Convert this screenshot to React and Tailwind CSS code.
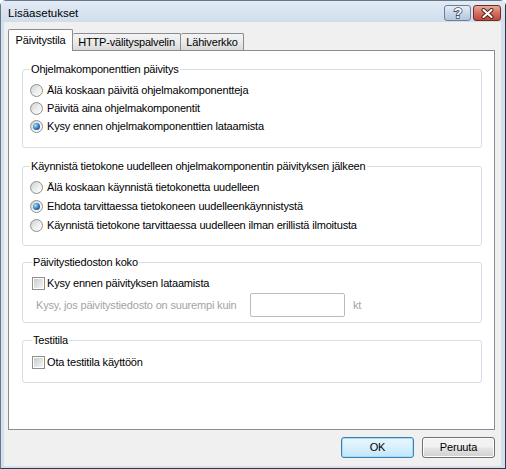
import React from 'react'

function Radio({ checked, label }) {
  return (
    <div className="flex items-center">
      <span className="flex h-[13px] w-[13px] items-center justify-center rounded-full border border-[#8e8f8f] bg-gradient-to-br from-[#cfcfcf] via-[#ececec] to-[#ffffff]">
        {checked && (
          <span className="h-[7px] w-[7px] rounded-full bg-[radial-gradient(circle_at_35%_35%,#b6e2fa,#3479c2_50%,#0e3c7a)]" />
        )}
      </span>
      <span className="ml-[4px]">{label}</span>
    </div>
  )
}

function Checkbox({ label }) {
  return (
    <div className="flex h-[18px] items-center">
      <span className="ml-[2px] flex h-[13px] w-[13px] items-center justify-center border border-[#8e8f8f] bg-white">
        <span className="h-[9px] w-[9px] bg-gradient-to-br from-[#cbcbcb] to-[#f6f6f6]" />
      </span>
      <span className="ml-[2px]">{label}</span>
    </div>
  )
}

function Group({ title, legendClass = 'ml-0', className = '', children }) {
  return (
    <fieldset className={`rounded-[3px] border border-[#d5dfe5] px-[7px] ${className}`}>
      <legend className={`px-[1px] leading-[13px] text-black ${legendClass}`}>{title}</legend>
      {children}
    </fieldset>
  )
}

function HelpButton() {
  return (
    <div className="flex h-[16px] w-[27px] items-center justify-center rounded-[3px] border border-[#6c7f95] bg-gradient-to-b from-[#e6eef8] via-[#c9d8ea] to-[#b3c7de]">
      <svg width="12" height="14" viewBox="0 0 12 14">
        <text x="6" y="12" textAnchor="middle" fontSize="14" fontWeight="bold" fontFamily="Liberation Sans, Arial, sans-serif" fill="#ffffff" stroke="#3c4c5e" strokeWidth="1.6" paintOrder="stroke">?</text>
      </svg>
    </div>
  )
}

function CloseButton() {
  return (
    <div className="flex h-[16px] w-[28px] items-center justify-center rounded-[3px] border border-[#6e2d25] bg-gradient-to-b from-[#e9a99c] via-[#d2705f] to-[#c2473a]">
      <svg width="13" height="11" viewBox="0 0 13 11">
        <path d="M2.5 2 L10.5 9 M10.5 2 L2.5 9" stroke="#4a1c16" strokeWidth="4" strokeLinecap="round" />
        <path d="M2.5 2 L10.5 9 M10.5 2 L2.5 9" stroke="#ffffff" strokeWidth="2.2" strokeLinecap="round" />
      </svg>
    </div>
  )
}

export default function App() {
  return (
    <div className="flex h-[469px] w-[506px] flex-col rounded-t-[6px] border border-[#687889] border-r-[#2e3842] border-b-[#2e3842] bg-[#d3e0ee] font-['Liberation_Sans',Arial,sans-serif] text-[11px] tracking-[-0.18px] text-black">
      {/* title bar */}
      <div className="flex h-[21px] items-start bg-gradient-to-b from-[#e2ebf5] to-[#d0ddec] pl-[7px] pr-[4px]">
        <span className="mt-[5px] text-[11.5px] leading-[14px] tracking-normal">Lisäasetukset</span>
        <div className="ml-auto mt-[4px] flex gap-[2px]">
          <HelpButton />
          <CloseButton />
        </div>
      </div>

      {/* client */}
      <div className="mb-[2px] ml-[3px] mr-[4px] flex flex-1 flex-col bg-[#f0f0f0] pl-[4px] pt-[7px]">
        <div className="flex items-end">
          <div className="relative z-10 -mb-px flex h-[22px] w-[65px] items-center justify-center rounded-t-[2px] border border-b-0 border-[#898c95] bg-white">
            Päivitystila
          </div>
          <div className="flex h-[17px] w-[108px] items-center justify-center rounded-t-[2px] border border-b-0 border-l-0 border-[#898c95] bg-gradient-to-b from-[#f3f3f3] via-[#ebebeb] to-[#d9d9d9]">
            HTTP-välityspalvelin
          </div>
          <div className="flex h-[17px] w-[63px] items-center justify-center rounded-t-[2px] border border-b-0 border-l-0 border-[#898c95] bg-gradient-to-b from-[#f3f3f3] via-[#ebebeb] to-[#d9d9d9]">
            Lähiverkko
          </div>
        </div>

        <div className="flex h-[380px] w-[487px] flex-col border border-[#898c95] bg-white pl-[13px] pr-[12px] pt-[12px]">
          <Group title="Ohjelmakomponenttien päivitys" className="pb-[12px]">
            <div className="mt-[5px] flex flex-col [&>div]:h-[18px]">
              <Radio label="Älä koskaan päivitä ohjelmakomponentteja" />
              <Radio label="Päivitä aina ohjelmakomponentit" />
              <Radio checked label="Kysy ennen ohjelmakomponenttien lataamista" />
            </div>
          </Group>

          <Group title="Käynnistä tietokone uudelleen ohjelmakomponentin päivityksen jälkeen" className="mt-[12px] pb-[10px]">
            <div className="mt-[5px] flex flex-col [&>div]:h-[19px]">
              <Radio label="Älä koskaan käynnistä tietokonetta uudelleen" />
              <Radio checked label="Ehdota tarvittaessa tietokoneen uudelleenkäynnistystä" />
              <Radio label="Käynnistä tietokone tarvittaessa uudelleen ilman erillistä ilmoitusta" />
            </div>
          </Group>

          <Group title="Päivitystiedoston koko" legendClass="ml-[2px]" className="mt-[10px] pb-[5px]">
            <div className="mt-[5px]">
              <Checkbox label="Kysy ennen päivityksen lataamista" />
            </div>
            <div className="mt-[1px] flex items-center">
              <span className="ml-[6px] w-[214px] text-[#a3a3a3]">Kysy, jos päivitystiedosto on suurempi kuin</span>
              <span className="h-[24px] w-[95px] rounded-[2px] border border-[#b9bcc3] bg-white" />
              <span className="ml-[8px] text-[#a3a3a3]">kt</span>
            </div>
          </Group>

          <Group title="Testitila" legendClass="ml-[2px]" className="mt-[11px] pb-[11px]">
            <div className="mt-[6px]">
              <Checkbox label="Ota testitila käyttöön" />
            </div>
          </Group>
        </div>

        <div className="mt-[7px] flex w-[487px] justify-end gap-[8px]">
          <button className="flex h-[21px] w-[73px] items-center justify-center rounded-[3px] border border-[#3c7fb1] bg-gradient-to-b from-[#eaf6fd] via-[#d9f0fc] to-[#bee6fd] shadow-[inset_0_0_0_1px_#a6dcf6]">
            OK
          </button>
          <button className="flex h-[21px] w-[73px] items-center justify-center rounded-[3px] border border-[#707070] bg-gradient-to-b from-[#f2f2f2] from-45% via-[#e4e4e4] via-55% to-[#d0d0d0] shadow-[inset_0_0_0_1px_#fcfcfc]">
            Peruuta
          </button>
        </div>
      </div>
    </div>
  )
}
